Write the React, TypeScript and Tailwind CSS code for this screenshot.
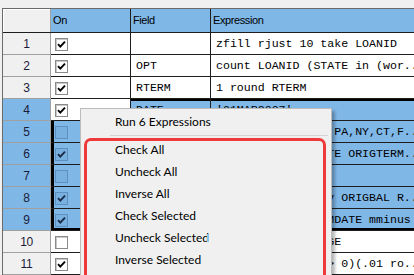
import React from "react";

type Row = { n: number; on: boolean; field: string; expr: string };

const rows: Row[] = [
  { n: 1, on: true, field: "", expr: "zfill rjust 10 take LOANID" },
  { n: 2, on: true, field: "OPT", expr: "count LOANID (STATE in (wor.." },
  { n: 3, on: true, field: "RTERM", expr: "1 round RTERM" },
  { n: 4, on: true, field: "DATE", expr: "'01MAR2007'" },
  { n: 5, on: false, field: "STATE", expr: "STATES in (CA,NJ,PA,NY,CT,F.." },
  { n: 6, on: true, field: "MATDATE", expr: "0 mmplus FIRSTDATE ORIGTERM.." },
  { n: 7, on: false, field: "", expr: "" },
  { n: 8, on: true, field: "PCTBAL", expr: "100 * CURRBAL div ORIGBAL R.." },
  { n: 9, on: true, field: "AGE", expr: "12 mmplus FIRSTPMDATE mminus D" },
  { n: 10, on: false, field: "OCC", expr: "OCCUPANCY MORTGAGE" },
  { n: 11, on: true, field: "PAID", expr: "(LOANAMT-CURBAL > 0)(.01 ro.." },
];

const menuItems = [
  "Check All",
  "Uncheck All",
  "Inverse All",
  "Check Selected",
  "Uncheck Selected",
  "Inverse Selected",
];

const uiFont = { fontFamily: '"Liberation Sans", Arial, sans-serif' };
const monoFont = { fontFamily: '"Liberation Mono", "Courier New", monospace' };
const menuFont = { fontFamily: 'Lato, "Noto Sans", sans-serif' };

const CheckBox = ({ checked, sel }: { checked: boolean; sel: boolean }) => (
  <div
    className={
      sel
        ? "w-[13px] h-[13px] border border-[#5f8fbf] bg-[#78b0e0] flex items-center justify-center"
        : "w-[13px] h-[13px] border border-[#8a8a8a] bg-white shadow-[inset_1px_1px_0_#c8c8c8] flex items-center justify-center"
    }
  >
    {checked && (
      <svg width="11" height="11" viewBox="0 0 11 11">
        <path
          d="M2 5.2 L4.3 7.6 L9 2.6"
          fill="none"
          stroke={sel ? "#1c2b4a" : "#000"}
          strokeWidth="1.9"
        />
      </svg>
    )}
  </div>
);

export default function App() {
  return (
    <div className="relative w-[414px] h-[275px] overflow-hidden bg-[#f0f0f0] pl-[2px] pt-[8px]">
      <div className="border-l border-t border-[#6b6b6b] bg-white">
        {/* header */}
        <div className="flex h-[24px] border-b border-[#1e1e1e] text-[11px] tracking-[-0.4px] text-black" style={uiFont}>
          <div className="w-[48px] bg-[#f0f0f0] border-r border-[#a0a0a0] shadow-[inset_1px_1px_0_#fff]" />
          <div className="w-[80px] bg-[#7fb7e7] border-r border-[#1e1e1e] pl-[2px] flex items-center">On</div>
          <div className="w-[80px] bg-[#7fb7e7] border-r border-[#1e1e1e] pl-[2px] flex items-center">Field</div>
          <div className="flex-1 bg-[#7fb7e7] pl-[2px] flex items-center">Expression</div>
        </div>

        {rows.map((r) => {
          const sel = r.n >= 4 && r.n <= 9;
          const onSel = r.n >= 5 && r.n <= 9;
          const top = r.n === 4 ? " shadow-[inset_0_2px_0_#000]" : "";
          const bottom = r.n === 9 ? " shadow-[inset_0_-2px_0_#000]" : "";
          const onEdge =
            r.n === 9
              ? " shadow-[inset_3px_-2px_0_#000]"
              : onSel
              ? " shadow-[inset_3px_0_0_#000]"
              : "";
          return (
            <div key={r.n} className="flex h-[22px]">
              <div
                className={
                  (sel ? "bg-[#7fb7e7] " : "bg-[#f0f0f0] ") +
                  "w-[48px] border-r border-b border-[#a0a0a0] flex items-center justify-center text-[12px] tracking-[-0.3px] text-[#1b1b3a]"
                }
                style={uiFont}
              >
                {r.n}
              </div>
              <div
                className={
                  (onSel ? "bg-[#7fb7e7]" : "bg-white") +
                  " w-[80px] border-r border-b border-[#1e1e1e] flex items-center pl-[4px] pt-[1px]" +
                  onEdge
                }
              >
                <CheckBox checked={r.on} sel={onSel} />
              </div>
              <div
                className={
                  (sel ? "bg-[#7fb7e7]" : "bg-white") +
                  " w-[80px] border-r border-b border-[#1e1e1e] flex items-center pl-[5px] text-[11.6px] text-black whitespace-nowrap overflow-hidden" +
                  top +
                  bottom
                }
                style={monoFont}
              >
                {r.field}
              </div>
              <div
                className={
                  (sel ? "bg-[#7fb7e7]" : "bg-white") +
                  " flex-1 border-b border-[#1e1e1e] flex items-center pl-[5px] text-[11.6px] text-black whitespace-nowrap overflow-hidden" +
                  top +
                  bottom
                }
                style={monoFont}
              >
                {r.expr}
              </div>
            </div>
          );
        })}
      </div>

      {/* context menu */}
      <div
        className="absolute left-[80px] top-[108px] w-[252px] h-[190px] bg-[#f0f0f0] border border-[#bcbcbc] shadow-[3px_3px_3px_rgba(0,0,0,0.28)] pt-[2px] text-[12px] text-black"
        style={menuFont}
      >
        <div className="h-[22px] flex items-center pl-[34px]">Run 6 Expressions</div>
        <div className="h-[6px] pt-[2px] pl-[29px] pr-[3px]">
          <div className="h-px bg-[#d4d4d4]" />
        </div>
        {menuItems.map((m) => (
          <div key={m} className="h-[22px] flex items-center pl-[34px]">
            {m}
          </div>
        ))}
      </div>

      {/* annotation */}
      <div className="absolute left-[84px] top-[138px] w-[242px] h-[160px] border-[3px] border-[#ee3a3a] rounded-[7px]" />
      <div className="absolute left-[207px] top-[234px] w-[2px] h-[8px] bg-[#7fc4f0]" />
    </div>
  );
}
